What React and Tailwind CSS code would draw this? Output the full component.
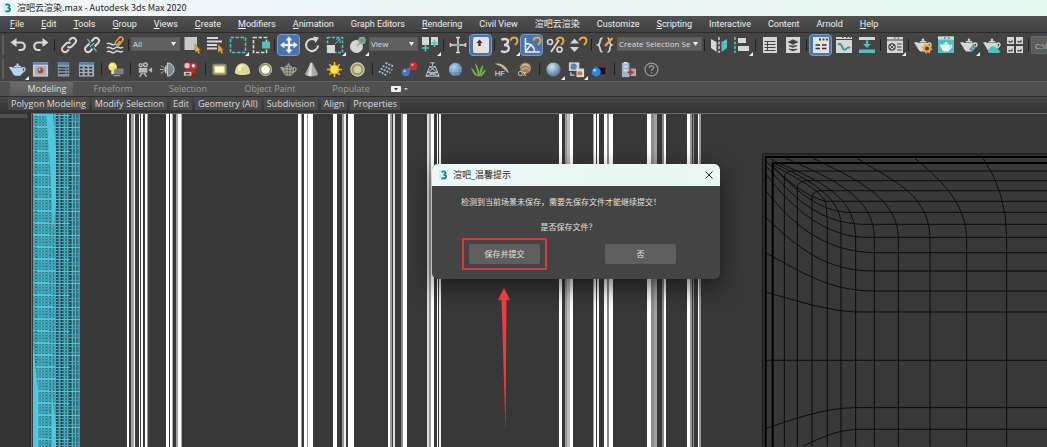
import clsx from 'clsx';

const W = '#d6d6d6';
const TEAL = '#4cc4bd';
const GOLD = '#e9a93a';

const menus = [
  ['F', 'ile'],
  ['E', 'dit'],
  ['T', 'ools'],
  ['G', 'roup'],
  ['V', 'iews'],
  ['C', 'reate'],
  ['M', 'odifiers'],
  ['A', 'nimation'],
  ['', 'Graph Editors'],
  ['R', 'endering'],
  ['', 'Civil View'],
  ['', '渲吧云渲染'],
  ['', 'Customize'],
  ['S', 'cripting'],
  ['', 'Interactive'],
  ['', 'Content'],
  ['', 'Arnold'],
  ['H', 'elp'],
];

const Cursor = () => <path d="M13 9v9l2-2 1.5 3 1.7-1-1.5-2.5H19z" fill={GOLD} stroke="#5b4313" strokeWidth=".4" />;

const Magnet = () => <path d="M11.5 5.5c1-4 6.500-4 7 0 .2 2-.8 3-2.500 4.500" fill="none" stroke={GOLD} strokeWidth="2" />;

const Pot = ({ fill = W }) => (
  <g>
    <path d="M14.5 8.500c4.500-2 5 3-1 5.500" fill="none" stroke={fill} strokeWidth="1.4" />
    <path d="M5 8h10.500c1 4-.5 7-2.500 8.500H7.500C5.500 15.500 4.800 13.500 4.300 12.500L1 7.500l3-.5z" fill={fill} />
    <path d="M6 7.500c1-2.700 7-2.700 8 0z" fill={fill} />
    <circle cx="10" cy="4.700" r="1.200" fill={fill} />
  </g>
);

const Ball = ({ id, from, to, r = 7 }) => (
  <g>
    <defs>
      <radialGradient id={id} cx=".38" cy=".32" r=".75">
        <stop offset="0" stopColor={from} />
        <stop offset="1" stopColor={to} />
      </radialGradient>
    </defs>
    <circle cx="10" cy="10" r={r} fill={`url(#${id})`} />
  </g>
);

const chainA = 'M8.500 11.500a3 3 0 0 0 4.200 0l3.400-3.400a3 3 0 0 0-4.300-4.300l-1.700 1.700';
const chainB = 'M11.500 8.500a3 3 0 0 0-4.200 0l-3.400 3.400a3 3 0 0 0 4.300 4.300l1.700-1.700';

const icons = {
  undo: (
    <g>
      <path d="M8 7.500h5a3.500 3.500 0 0 1 0 7.500h-2.500" fill="none" stroke={W} strokeWidth="2.2" />
      <path d="M2.500 7.500 8.500 3v9z" fill={W} />
    </g>
  ),
  redo: (
    <g>
      <path d="M12 7.500H7A3.500 3.500 0 0 0 7 15h2.500" fill="none" stroke={W} strokeWidth="2.2" />
      <path d="M17.500 7.500 11.500 3v9z" fill={W} />
    </g>
  ),
  link: <path d={chainA + chainB} fill="none" stroke={W} strokeWidth="2" />,
  unlink: (
    <g fill="none" strokeWidth="2">
      <path d="M12.500 11.500l3.600-3.400a3 3 0 0 0-4.300-4.300L9.500 6.500M7.500 8.500l-3.600 3.400a3 3 0 0 0 4.300 4.300l2.300-2.500" stroke={W} />
      <path d="M5.500 4l3 4M11.500 12.500l3 4M12 8l-4 4" stroke={TEAL} strokeWidth="1.3" />
    </g>
  ),
  warp: (
    <g fill="none">
      <path d="M2 9c3-3 5 3 8 0M2 13c3-3 5 3 8 0s5 2 8-1M2 17c3-3 5 3 8 0s5 2 8-1" stroke={W} strokeWidth="1.5" />
      <path d="M12 10a2 2 0 0 1-1-3.500l3-3.500a2 2 0 0 1 3.500 2.500l-3 4a2 2 0 0 1-2.500.5l3-4" stroke={GOLD} strokeWidth="1.4" />
    </g>
  ),
  select: (
    <g>
      <path d="M2.500 2H15v13H2.500z" fill="#c9c9c9" />
      <Cursor />
    </g>
  ),
  byName: (
    <g>
      <path d="M2 3h11M2 6.500h15M2 10h10M2 13.500h10" stroke={W} strokeWidth="1.8" />
      <Cursor />
    </g>
  ),
  region: <path d="M2.500 2.500h15v15h-15z" fill="none" stroke={TEAL} strokeWidth="1.6" strokeDasharray="3.5 1.5" />,
  crossing: (
    <g>
      <path d="M2.500 2.500h13v15h-13z" fill="none" stroke={W} strokeWidth="1.6" strokeDasharray="3.5 1.5" />
      <path d="M11 6.500h8v7h-8z" fill={TEAL} />
    </g>
  ),
  move: (
    <path
      d="M10 1.500l3 3.700h-2V9h3.800V7l3.700 3-3.700 3v-2H11v3.800h2L10 18.500l-3-3.700h2V11H5.200v2L1.500 10l3.700-3v2H9V5.200H7z"
      fill="#f1f1f1"
      stroke="#f1f1f1"
      strokeWidth=".4"
    />
  ),
  rotate: (
    <g>
      <path d="M13.500 5.200A6 6 0 1 0 16 10.500" fill="none" stroke={W} strokeWidth="2.1" />
      <path d="M11 1.500l6 1-3.500 5.500z" fill={W} />
    </g>
  ),
  scale: (
    <g>
      <path d="M2.500 2.500h15v15h-15z" fill="none" stroke={TEAL} strokeWidth="1.5" strokeDasharray="3 1.5" />
      <path d="M2 10h8v8H2z" fill={W} />
      <path d="M10 9l5-5m0 4V4h-4" stroke={TEAL} fill="none" />
    </g>
  ),
  place: (
    <g>
      <circle cx="8.500" cy="11.500" r="6.500" fill={W} />
      <path d="M9 11l5-5" stroke={GOLD} strokeWidth="2" />
      <circle cx="14" cy="5.500" r="3" fill="#9b8a4d" stroke={TEAL} strokeWidth="1.5" />
    </g>
  ),
  pivot: (
    <g>
      <path d="M2 2h7v8H2zM11 2h7v8h-7z" fill={W} />
      <path d="M5.500 9.500v7M2 13h7M14.500 5v7M11.500 8h6" stroke={TEAL} strokeWidth="1.7" />
    </g>
  ),
  manipulate: (
    <g>
      <path d="M10 2v16M2 10h16" stroke={W} strokeWidth="1.6" />
      <path d="M8 2.500h4M8 17.500h4M2.500 8v4M17.500 8v4" stroke={W} strokeWidth="1.6" />
      <path d="M8.500 8.500h3v3h-3z" fill={TEAL} />
    </g>
  ),
  keyboard: (
    <g>
      <rect x="2" y="2" width="16" height="16" rx="2" fill="#e2e2e2" />
      <path d="M8.500 4.500l3 3.500H9.700v3H7.300V8H5.500z" fill="#333" />
    </g>
  ),
  snap3: (
    <g>
      <path d="M2.500 5C5 3 9.500 4 9 7 8.700 9 7 10 5 10c3 0 5 1 4.800 3.500C9.500 17.500 4.500 17.500 2 16" fill="none" stroke={W} strokeWidth="2.4" />
      <Magnet />
    </g>
  ),
  angle: (
    <g>
      <path d="M3.500 3v14H18M3.500 8.500c5 0 9 3 9 8M4 16l5.500-7" fill="none" stroke="#f1f1f1" strokeWidth="1.5" />
      <Magnet />
    </g>
  ),
  percent: (
    <g>
      <path d="M14 5L6 17" stroke={W} strokeWidth="1.8" />
      <circle cx="5" cy="7" r="2.500" fill="none" stroke={W} strokeWidth="1.7" />
      <circle cx="14.500" cy="14.500" r="2.500" fill="none" stroke={W} strokeWidth="1.7" />
      <Magnet />
    </g>
  ),
  spinner: (
    <g>
      <path d="M2 8.500l4.500-5 4.500 5zM2 12h9l-4.500 5z" fill={W} />
      <Magnet />
    </g>
  ),
  sets: (
    <g fill="none" strokeWidth="1.7">
      <path d="M6.500 3C2.500 3 5.500 9 2 10c3.500 1 .5 7 4.500 7M11.500 3c3 0 1 6 4 7-3 1 0 7-4 7" stroke={W} />
      <path d="M9 11l7.500-8" stroke={GOLD} strokeWidth="2.3" />
    </g>
  ),
  mirror: (
    <g>
      <path d="M2 4l5.500 3v10L2 13z" fill={W} />
      <path d="M18 4l-5.500 3v10l5.500-4z" fill={TEAL} />
      <path d="M10 2v16" stroke={W} strokeWidth="1.4" strokeDasharray="3 1.5" />
    </g>
  ),
  align: (
    <g>
      <path d="M3 2v16" stroke={TEAL} strokeWidth="1.6" strokeDasharray="3 1.5" />
      <path d="M6 3h8v5H6zM6 11h11v5H6z" fill={W} />
    </g>
  ),
  explorer: (
    <g>
      <path d="M3 2h14v16H3z" fill={W} />
      <path d="M4.500 6.500h11M4.500 9.500h11M4.500 12.500h11M4.500 15.500h11" stroke="#444" />
      <path d="M7.500 6v10" stroke="#444" />
    </g>
  ),
  layers: (
    <g>
      <path d="M3 2h14v16H3z" fill={W} />
      <path d="M6 7l4-2 4 2-4 2zM6 10.500l4 1.500 4-1.500M6 14l4 1.500 4-1.500" fill="#444" stroke="#444" strokeWidth="1.3" />
    </g>
  ),
  ribbon: (
    <g>
      <path d="M2 2h16v16H2z" fill="#e2e2e2" />
      <path d="M8 3.500h2v2H8zM11.500 3.500h2v2h-2zM15 3.500h2v2h-2z" fill="#444" />
      <path d="M4.500 10h4.500M4.500 13.500h4.500M11 10h4.500M11 13.500h4.500" stroke="#333" strokeWidth="1.7" />
    </g>
  ),
  curve: (
    <g>
      <path d="M2 2h16v16H2z" fill={W} />
      <path d="M2 4.500h16" stroke="#444" />
      <path d="M8 2.500h1.500M12 2.500h1.500M15.500 2.500H17" stroke="#444" />
      <path d="M4 10c4-5 4 8 8 4 2-2 3-2 4-1" fill="none" stroke="#369b96" strokeWidth="1.9" />
    </g>
  ),
  schematic: (
    <g>
      <path d="M2 2h16v3H2z" fill={W} />
      <path d="M2 14.500h16v3.500H2z" fill={TEAL} />
      <path d="M8.800 5.500h2.400V9H14l-4 4-4-4h2.800z" fill={TEAL} />
    </g>
  ),
  material: (
    <g>
      <path d="M2 2h16v16H2z" fill={W} />
      <path d="M2 5h16M9 3h1.500M12.500 3H14" stroke="#444" />
      <circle cx="7" cy="12" r="3.200" fill="none" stroke="#444" strokeWidth="1.2" />
      <path d="M5 10l4 4m0-4l-4 4M12 9h4.500M12 12h4.500M12 15h4.500" stroke="#444" />
    </g>
  ),
  renderSetup: (
    <g>
      <Pot />
      <circle cx="14" cy="13.500" r="3" fill="#444" stroke={GOLD} strokeWidth="2" />
      <circle cx="14" cy="13.500" r="4.600" fill="none" stroke={GOLD} strokeWidth="1.3" strokeDasharray="1.8 1.8" />
    </g>
  ),
  renderFrame: (
    <g>
      <path d="M2 1.500h16V18H2z" fill={TEAL} />
      <path d="M2 1.500h16v3H2z" fill={W} />
      <path d="M8 3h1.500M12 3h1.500" stroke="#444" />
      <g transform="translate(2.500 4) scale(.75)">
        <Pot fill="#f0f0f0" />
      </g>
    </g>
  ),
  render: (
    <g>
      <Pot />
      <path d="M15 9l-4.500 5.500H13L12 18l5-5.500h-2.500z" fill={TEAL} stroke="#444" strokeWidth=".5" />
    </g>
  ),
  cloud: (
    <g>
      <Pot />
      <path d="M7 18a2.500 2.500 0 0 1 .5-4.500 3.500 3.500 0 0 1 6-1c2 0 3 1 3 2.500 2 .5 2 3 0 3z" fill={TEAL} />
    </g>
  ),
  gallery: (
    <g>
      <path d="M2 2h7v7H2zM11 2h7v7h-7zM2 11h7v7H2zM11 11h7v7h-7z" fill={W} />
      <path d="M3.500 7.500v-2l2 1 2-2v3zM12.500 7.500v-2l2 1 2-2v3zM3.500 16.500v-2l2 1 2-2v3zM12.500 16.500v-2l2 1 2-2v3z" fill="#444" />
    </g>
  ),
  bluePot: <Pot fill="#b9d3ea" />,
  frame: (
    <g>
      <path d="M2 2.500h16v15H2z" fill="#c8ccd2" />
      <path d="M2 2.500h16v2.500H2z" fill="#5f86ad" />
      <path d="M4 6.500h12V16H4z" fill="#a4afbd" />
      <circle cx="10" cy="11" r="3" fill="#a34b43" />
      <circle cx="9" cy="10" r="1" fill="#e8d2cd" />
    </g>
  ),
  list: (
    <g>
      <path d="M4 2.500h12v15H4z" fill="#8794a1" />
      <path d="M4 2.500h12V5H4z" fill="#557ea6" />
      <path d="M5 8h7M5 11h7M5 14h7M13 8h2M13 11h2M13 14h2" stroke="#30373e" strokeWidth="1.3" />
    </g>
  ),
  table: (
    <g>
      <path d="M2 2.500h16v15H2z" fill="#a3acb5" />
      <path d="M2 2.500h16V5H2z" fill="#557ea6" />
      <path d="M3 8h3M8 8h3M13 8h3M3 11.500h3M8 11.500h3M13 11.500h3M3 15h3M8 15h3M13 15h3" stroke="#30373e" strokeWidth="1.9" />
    </g>
  ),
  bulb: (
    <g>
      <circle cx="7" cy="7" r="4.500" fill="#f1e55c" />
      <circle cx="6" cy="5.500" r="1.500" fill="#fffbd0" />
      <path d="M5.500 11.500h3V15h-3z" fill="#d8d8d8" />
      <path d="M9 9.500h9v5H9z" fill="#777e82" stroke="#aaa" strokeWidth=".6" />
      <path d="M8 16.500h7" stroke="#bbb" />
    </g>
  ),
  camera: (
    <g fill="#b9b9b9">
      <circle cx="6" cy="5.500" r="2.300" />
      <circle cx="11" cy="5" r="2.700" />
      <path d="M4 8.500h9v5H4zM14 10.500l4-3v6zM7 13l-3 5h1.500l3-4 3 4H13l-3-5z" />
      <circle cx="6" cy="5.500" r=".8" fill="#333" />
      <circle cx="11" cy="5" r="1" fill="#333" />
    </g>
  ),
  halfMoon: (
    <g>
      <path d="M10 3a7 7 0 0 1 0 14z" fill="#7d8991" stroke="#c9d1d6" />
      <path d="M9 5c-3 2-3 8 0 10z" fill="#c9d1d6" />
      <path d="M2 10h4M3 6l3 2M3 14l3-2" stroke="#bbb" />
    </g>
  ),
  redCamera: (
    <g>
      <circle cx="6.500" cy="6" r="3.500" fill="#c5cbd0" stroke="#a02b2b" />
      <circle cx="13" cy="6.500" r="4" fill="#c03434" />
      <circle cx="13" cy="6" r="1.800" fill="#ddd" />
      <path d="M4 10h11v4.500H4z" fill="#a83434" />
      <path d="M3 12.500h8v4H3z" fill="#c8c8c8" />
      <path d="M12 14l5 1-2 3h-4z" fill="#8c2020" />
      <path d="M5 14.500h4" stroke="#333" strokeWidth="1.5" />
    </g>
  ),
  planeLight: (
    <g>
      <rect x="2.500" y="4" width="15" height="12" rx="2" fill="#8f8d68" />
      <path d="M5 6.500h10v7H5z" fill="#fffcd2" stroke="#ded88b" />
    </g>
  ),
  domeLight: (
    <g>
      <path d="M2 14c0-14 16-14 16 0-2 2.500-14 2.500-16 0z" fill="#dcd98f" />
      <path d="M5 11c0-6 5-7 7-5-2 0-4 2-4 6z" fill="#f5f3c4" />
    </g>
  ),
  sphereLight: (
    <g>
      <circle cx="10" cy="10" r="6.500" fill="#8b8a75" stroke="#c6c5b0" />
      <circle cx="10" cy="10" r="4.500" fill="#fffde2" />
    </g>
  ),
  wirePot: (
    <g>
      <Pot fill="#a8a58e" />
      <path d="M6 8l1.500 8M10 6v10M14 8l-1.500 8M5 11h10M6 14h8" stroke="#55544a" strokeWidth=".6" />
    </g>
  ),
  cone: (
    <g>
      <path d="M9 3h2l6 12c-2 3-12 3-14 0z" fill="#aaa9a2" />
      <path d="M9 3h1.500L10 17c-2 0-3-.3-4-.7z" fill="#e1e0da" />
    </g>
  ),
  sun: (
    <g>
      <path d="M10 2v16M2 10h16M4.500 4.500l11 11M15.500 4.500l-11 11" stroke="#eeb52c" strokeWidth="1.7" />
      <circle cx="10" cy="10" r="4.700" fill="#ffe13c" stroke="#e79b1e" />
    </g>
  ),
  discLight: (
    <g>
      <circle cx="10" cy="10" r="7" fill="#9b986c" stroke="#d8d5a6" strokeWidth="1.2" />
      <circle cx="10" cy="10" r="4" fill="#d6d3a2" />
    </g>
  ),
  particles: (
    <g stroke="#9fc0dd" strokeWidth="1.9" strokeDasharray="2 1.3">
      <path d="M9 3l9 4M6 6l10 4.500M4 9l10 4.500M2 12l9 4.500" />
    </g>
  ),
  metaballs: (
    <g>
      <path d="M6 13l8-7" stroke="#7d6478" strokeWidth="3" />
      <circle cx="6" cy="13" r="4.200" fill="#4777b6" />
      <circle cx="14" cy="6.500" r="4.200" fill="#c33131" />
      <circle cx="5" cy="11.800" r="1.200" fill="#b3cae6" />
      <circle cx="13" cy="5" r="1.200" fill="#f3a3a0" />
    </g>
  ),
  pyramid: (
    <g fill="none" stroke="#b7cad9">
      <path d="M10 3v3M7.500 3h5M7 7h6l4 10H3zM7 7l8 6H5l8-6M5 13l12 4M15 13L3 17" />
    </g>
  ),
  cluster: (
    <g>
      <Ball id="cluster" from="#b6d5f1" to="#3f6b9b" />
      <path d="M4 7.500l12 1M4 12l12-.5M8 4l-.5 12M12 4l1 12" stroke="#9fc2e3" strokeDasharray="1.5 2" />
    </g>
  ),
  grass: (
    <path d="M9 17C7 13 4 9 2 8c2 5 3 8 6 9zM9 17c0-6-2-10-3-14 4 4 5 9 5 14zM11 17c0-6 1-9 4-12 0 4-2 8-3 12zM12 17c1-3 3-6 6-7-1 3-3 6-5 7z" fill="#7ab342" />
  ),
  hairFarm: (
    <g>
      <path d="M3 4c6-1 12 1 15 10-4-2-5-5-9-6 2 0 3 1 4 2-3-4-6-4-10-6z" fill="#c9b38c" />
      <text x="3" y="17" fontSize="8" fill="#e8e8e8" className="font-['Liberation_Sans']">HF</text>
    </g>
  ),
  ornatrix: (
    <g>
      <circle cx="11" cy="8.500" r="6" fill="#a57f55" />
      <path d="M6 8c3-4 7-4 10 0M7 11c3-4 6-3 9 0M8 5c2-1 5-1 7 1" fill="none" stroke="#dfc59d" />
      <text x="3" y="17" fontSize="7" fill="#e8e8e8" className="font-['Liberation_Sans']">Ox</text>
    </g>
  ),
  blueBall: <Ball id="blue" from="#d4e7f8" to="#42698f" r={7.5} />,
  swap: (
    <g>
      <path d="M2 2.500h11v9H2z" fill="#cdd5db" />
      <circle cx="7" cy="7" r="3.300" fill="#5d86ab" />
      <path d="M10 9h8v9h-8z" fill="#ddd" />
      <path d="M11 12h5v4h-5z" fill="#cb793d" />
      <path d="M4 13v3h4" stroke="#ccc" fill="none" strokeWidth="1.3" />
    </g>
  ),
  proxy: (
    <g>
      <path d="M4 2h14v14H4z" fill="none" stroke="#b33434" strokeDasharray="1.5 1.5" />
      <path d="M8 8h8v7H8z" fill="#111" />
      <circle cx="6.500" cy="12.500" r="4.800" fill="#2d86e0" />
      <circle cx="5" cy="10.800" r="1.400" fill="#a9d3ff" />
    </g>
  ),
  convert: (
    <g>
      <path d="M3 3h8v15H3z" fill="#9fb4c8" />
      <path d="M5 2h4v2H5zM5 6h4v2H5zM5 10h4v2H5z" fill="#d6e1eb" />
      <path d="M12 9h6v8h-6z" fill="#a9a9a9" />
      <path d="M9 12h3V10l4 3-4 3v-2H9z" fill="#c43131" />
    </g>
  ),
  help: (
    <g fill="none" stroke="#9a9a9a">
      <circle cx="10" cy="10" r="6.800" strokeWidth="1.3" />
      <path d="M7.800 8.300c0-3 4.500-2.800 4.500-.3 0 1.700-2.300 1.800-2.300 3.500M10 13v1.500" strokeWidth="1.4" />
    </g>
  ),
};

// '|' is a divider, '*' marks a pressed tool, '>' marks a tool with a flyout
const mainA = ['undo', 'redo', '|', 'link', 'unlink', 'warp', '|'];
const mainB = ['select', 'byName', 'region>', 'crossing', '|', 'move*', 'rotate', 'scale>', 'place>'];
const mainC = ['pivot>', '|', 'manipulate', 'keyboard*', '|', 'snap3>', 'angle*', 'percent', 'spinner', '|', 'sets'];
const mainD = [
  '|', 'mirror', 'align>', '|', 'explorer', 'layers', '|', 'ribbon*', 'curve', 'schematic', '|', 'material>', '|',
  'renderSetup', 'renderFrame', 'render>', 'cloud', 'gallery', '|',
];
const second = [
  'bluePot>', 'frame', 'list', 'table', '|', 'bulb', '|', 'camera', 'halfMoon', 'redCamera', '|',
  'planeLight', 'domeLight', 'sphereLight', 'wirePot', 'cone', 'sun', 'discLight', '|',
  'particles', 'metaballs', 'pyramid', 'cluster', 'grass', 'hairFarm', 'ornatrix', '|',
  'blueBall>', 'swap>', 'proxy', '|', 'convert', 'help',
];

const Tools = ({ items, wide }) =>
  items.map((item, i) => {
    if (item === '|') {
      return (
        <span key={i} className={clsx('flex shrink-0 justify-center', wide ? 'w-[6px]' : 'w-[5px]')}>
          <span className="h-3 w-px bg-[#202020]" />
        </span>
      );
    }
    const name = item.replace(/[*>]/g, '');
    const pressed = item.endsWith('*');
    return (
      <button
        key={i}
        type="button"
        aria-label={name}
        className={clsx(
          'relative flex h-[22px] w-[23px] shrink-0 items-center justify-center rounded-sm',
          pressed && 'border border-[#6f9bd0] bg-[#4a74ae]'
        )}
      >
        <svg viewBox="0 0 20 20" className={wide ? 'size-[19px]' : 'size-5'}>{icons[name]}</svg>
        {item.endsWith('>') && (
          <svg viewBox="0 0 4 4" className="absolute right-0 bottom-0 size-1"><path d="M4 0v4H0z" fill="#eee" /></svg>
        )}
      </button>
    );
  });

const Drop = ({ label, value, className }) => (
  <span className={clsx('relative mb-[3px] h-[14px] shrink-0', className)}>
    <select
      aria-label={label}
      className="block h-[14px] w-full appearance-none border border-[#595959] bg-[#616161] pr-[10px] pl-px text-[8px] leading-3 text-[#dcdcdc]"
    >
      <option>{value}</option>
    </select>
    <svg viewBox="0 0 5 4" className="absolute top-[5px] right-1 h-1 w-[5px]"><path d="M0 0h5L2.500 4z" fill="#eee" /></svg>
  </span>
);

const Grip = () => <span className="mr-[2px] ml-[2px] h-5 w-[2px] shrink-0 bg-[#5c5c5c]" />;

// x, width, colour of each bar
const bars = [
  [127, 2, '#fff'], [131, 3, '#a2a2a2'], [134, 1, '#fff'], [139, 1, '#fff'], [141, 2, '#fff'], [145, 2, '#fff'], [147, 1, '#8da3c4'],
  [166, 3, '#fff'], [170, 2, '#fff'], [172, 1, '#aaa'], [176, 2, '#a2a2a2'], [178, 3, '#fff'], [181, 1, '#aaa'],
  [298, 3, '#fff'], [301, 1, '#999'], [304, 3, '#fff'], [307, 1, '#999'], [308, 5, '#fff'],
  [333, 4, '#fff'], [342, 2, '#999'], [344, 2, '#eee'], [348, 6, '#fff'],
  [388, 2, '#fff'], [390, 2, '#999'], [393, 2, '#ddd'], [401, 2, '#888'], [403, 4, '#fff'],
  [427, 2, '#ddd'], [429, 2, '#999'], [431, 3, '#fff'], [437, 1, '#fff'], [439, 2, '#eee'],
  [559, 3, '#fff'], [565, 2, '#999'], [567, 3, '#bbb'], [570, 3, '#fff'],
  [593, 1, '#8fa5b5'], [594, 2, '#fff'], [597, 2, '#fff'], [604, 3, '#fff'], [607, 2, '#888'], [609, 4, '#fff'],
  [647, 4, '#fff'], [651, 3, '#8c8c8c'], [654, 3, '#a2a2a2'], [662, 2, '#888'], [664, 2, '#fff'],
  [687, 3, '#fff'], [690, 2, '#999'], [693, 1, '#888'], [698, 1, '#fff'], [699, 2, '#999'],
];

const meshLines = [
  'M103 920V115Q104 96 118 93H891', 'M142 920V140Q145 126 165 122H891', 'M186 920V170Q188 154 210 152H891',
  'M65 72C110 100 200 140 226 184Q230 200 232 250V920M65 74C100 115 170 170 226 184H891',
  'M65 66C180 120 268 170 273 250V920M50 65C120 130 190 210 290 217H891',
  'M62 58C200 120 310 160 317 285V920M50 80C120 160 200 250 340 253H891',
  'M100 52C260 120 370 175 373 290V920M50 105C130 210 230 290 345 292H891',
  'M180 50C300 110 440 165 445 290V920M50 155C140 270 240 335 370 338H891',
  'M322 55C400 110 535 150 540 290V920M45 230C150 330 230 392 370 393H891',
  'M495 55C560 110 645 180 650 290V920M50 340C160 400 240 452 370 453H891',
  'M700 55Q770 160 770 290V920M50 457C150 485 230 512 317 516H891',
  'M50 661H891', 'M50 865C150 830 230 804 317 803H891', 'M160 918C230 885 270 868 335 868H891',
];

const Cyan = () => {
  const rows = Array.from({ length: 130 }, (_, i) => i);
  return (
    <g>
      <path d="M33 114h47v400H33z" fill="#39707d" />
      <path d="M57 114v400M61.500 114v400M70 114v400" stroke="#274048" strokeWidth="1.5" />
      <path d="M34 114v400M38.500 114v400M41.500 114v400M44.500 114v400M48.500 114v400M52 114v400M55 114v400" stroke="#46bdd0" strokeWidth="1.5" />
      <path d="M59.500 114v400M64.500 114v400M67.500 114v400M72.500 114v400M75.500 114v400M79 114v400" stroke="#46b3c6" />
      {rows.map((i) => (
        <path
          key={i}
          d={`M${33 + (i * 7) % 5} ${115.5 + i * 3}H${i % 3 ? 80 : 70}M33 ${114.5 + i * 3}H${48 + (i * 5) % 9}`}
          stroke={i % 4 ? '#3fa2b4' : '#4ec6da'}
        />
      ))}
      <path d="M46 114h7l3 35v55l-3 25-3-65z" fill="#4cc9df" />
      <path d="M33 345l5 45v124h-5zM52 395l4 30v80h-5z" fill="#4cc9df" />
    </g>
  );
};

const Scene = () => (
  <svg className="absolute inset-0 h-full w-full" aria-hidden="true">
    <g transform="translate(-32 -114)">
      <Cyan />
      {bars.map(([x, w, fill]) => (
        <rect key={x} x={x} y="114" width={w} height="1200" fill={fill} />
      ))}
      <g transform="translate(750 140) scale(.3333)" fill="none" stroke="#0c0c0c" strokeWidth="3">
        {meshLines.map((d) => (
          <path key={d} d={d} />
        ))}
        <path d="M38 920V42H891" />
        <path d="M47 920V51H891M68 920V69H891" stroke="#000" strokeWidth="6" />
      </g>
    </g>
  </svg>
);

const Dialog = () => (
  <section
    role="dialog"
    aria-labelledby="dialog-title"
    className="absolute top-[50px] left-[400px] w-[288px] overflow-hidden rounded-md bg-[#444] shadow-[0_8px_24px_rgba(0,0,0,0.55)]"
  >
    <header className="flex h-[22px] items-center bg-linear-to-r from-[#ebf7f8] to-[#e8f8f2] pr-[6px] pl-[6px] text-[#222]">
      <Logo />
      <h2 id="dialog-title" className="ml-[3px] flex-1 text-[9px] leading-3">渲吧_温馨提示</h2>
      <button type="button" aria-label="Close">
        <svg viewBox="0 0 10 10" className="size-[10px]"><path d="M1.500 1.500l7 7m0-7l-7 7" stroke="#222" /></svg>
      </button>
    </header>
    <div className="pt-[10px] pr-11 pb-[15px] pl-[29px] text-[8px] leading-3 text-[#e2e2e2]">
      <p className="whitespace-nowrap">检测到当前场景未保存，需要先保存文件才能继续提交！</p>
      <p className="mt-[13px] text-center">是否保存文件？</p>
      <div className="mt-[11px] flex justify-between pl-2">
        <div className="relative">
          <button type="button" className="h-5 w-[71px] rounded-xs bg-[#5f5f5f]">保存并提交</button>
          <span className="pointer-events-none absolute -inset-x-[7px] -inset-y-[6px] border-2 border-[#d83a3c]" />
        </div>
        <button type="button" className="h-5 w-[71px] rounded-xs bg-[#5f5f5f]">否</button>
      </div>
    </div>
  </section>
);

const Logo = () => (
  <svg viewBox="0 0 12 12" className="size-3 shrink-0" aria-hidden="true">
    <path d="M1 1h7v10H1z" fill="#d3eef0" />
    <path d="M3.500 2.800c4.500-1.300 5.500 2.200 2.200 3.100 4 .3 3 4.300-2.200 3.200" fill="none" stroke="#13818a" strokeWidth="1.8" />
  </svg>
);

const App = () => (
  <div className="flex min-h-screen flex-col overflow-hidden bg-[#444] font-['Open_Sans','Noto_Sans_CJK_SC',sans-serif]">
    <header className="flex h-4 items-center gap-[3px] bg-linear-to-r from-[#f0f5fb] to-[#e4f7ef] pl-[2px]">
      <Logo />
      <h1 className="font-['Noto_Sans_CJK_SC',sans-serif] text-[9px] leading-4 text-[#222]">
        渲吧云渲染.max - Autodesk 3ds Max 2020
      </h1>
    </header>

    <nav className="flex h-4 items-center gap-[17px] bg-linear-to-b from-[#505050] to-[#414141] pl-[10px] font-['Roboto','Noto_Sans_CJK_SC',sans-serif] text-[9px] leading-4 whitespace-nowrap text-[#efefef]">
      {menus.map(([key, rest]) => (
        <a key={key + rest} href="#menu">
          {key && <span className="underline underline-offset-1">{key}</span>}
          {rest}
        </a>
      ))}
    </nav>

    <div className="flex h-[25px] items-center overflow-hidden border-t border-[#2c2c2c]">
      <Grip />
      <Tools items={mainA} />
      <Drop label="Selection filter" value="All" className="w-[49px]" />
      <Tools items={mainB} />
      <Drop label="Reference coordinate system" value="View" className="w-[49px]" />
      <Tools items={mainC} />
      <Drop label="Named selection sets" value="Create Selection Set" className="w-[85px]" />
      <Tools items={mainD} />
      <input
        aria-label="Project folder"
        defaultValue="C:\Users"
        className="h-[18px] w-16 shrink-0 border border-[#666] bg-[#5c5c5c] px-[3px] text-[8px] text-[#c6c6c6]"
      />
    </div>
    <div className="flex h-6 items-center overflow-hidden">
      <Grip />
      <Tools items={second} wide />
    </div>

    <div className="flex h-[15px] items-center border-t border-[#606060] bg-[#505050] pl-[10px] text-[9px] leading-[14px] text-[#9c9c9c]">
      <button type="button" className="w-[63px] bg-linear-to-b from-[#6c6c6c] to-[#5a5a5a] pl-[11px] text-[#dedede]">Modeling</button>
      <button type="button" className="w-20">Freeform</button>
      <button type="button" className="w-[70px]">Selection</button>
      <button type="button" className="w-[94px]">Object Paint</button>
      <button type="button" className="w-[68px]">Populate</button>
      <button type="button" aria-label="Minimize ribbon" className="ml-[6px]">
        <svg viewBox="0 0 18 6" className="h-[6px] w-[18px]">
          <rect width="10" height="6" rx="1" fill="#eee" />
          <path d="M3 2h4L5 4.500z" fill="#333" />
          <path d="M13 2h4l-2 2.500z" fill="#bbb" />
        </svg>
      </button>
    </div>
    <div className="flex h-[17px] items-start gap-[3px] border-t border-[#2e2e2e] bg-linear-to-b from-[#454545] to-[#343434] pl-2 text-[9px] leading-[13px] whitespace-nowrap text-[#dadada]">
      {['Polygon Modeling', 'Modify Selection', 'Edit', 'Geometry (All)', 'Subdivision', 'Align', 'Properties'].map((name) => (
        <button key={name} type="button" className="bg-[#4a4a4a] px-[3px]">{name}</button>
      ))}
    </div>

    <main className="flex flex-1 bg-[#333]">
      <aside className="w-[31px] shrink-0 border-r-2 border-[#2c2c2c] pt-px">
        <div className="h-1 w-[27px] bg-[#505050]" />
      </aside>
      <div className="relative flex-1 overflow-hidden border-t border-l border-[#7d6b3a] bg-[#383838]">
        <Scene />
        <Dialog />
        <svg viewBox="0 0 14 144" className="absolute top-[174px] left-[465px] h-36 w-[14px]" aria-hidden="true">
          <path d="M7 0l6 12H9.500L8.500 144 4.500 12H1z" fill="#ee3a3c" />
        </svg>
      </div>
    </main>
  </div>
);

export default App;
